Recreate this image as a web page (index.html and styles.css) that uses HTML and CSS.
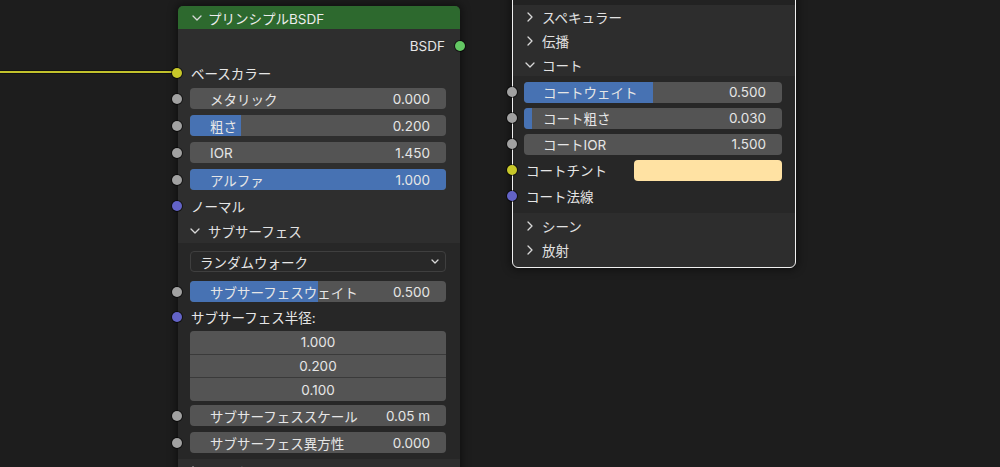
FILE: index.html
```html
<!DOCTYPE html>
<html lang="ja">
<head>
<meta charset="utf-8">
<title>Principled BSDF</title>
<link rel="stylesheet" href="styles.css">
</head>
<body>
<div class="canvas">
  <div class="link"></div>

  <div class="node node-left">
    <div class="node-header">
      <svg class="chev-down" width="10" height="6" viewBox="0 0 10 6"><path d="M1 1 L5 5 L9 1"/></svg>
      <span>プリンシプルBSDF</span>
    </div>
    <div class="row out-row"><span>BSDF</span><span class="socket s-green out"></span></div>
    <div class="row label-row"><span class="socket s-yellow in"></span>ベースカラー</div>
    <div class="row field-row"><span class="socket s-grey in"></span>
      <div class="field"><div class="fill" style="width:0%"></div><span class="lbl">メタリック</span><span class="val">0.000</span></div></div>
    <div class="row field-row"><span class="socket s-grey in"></span>
      <div class="field"><div class="fill" style="width:20%"></div><span class="lbl">粗さ</span><span class="val">0.200</span></div></div>
    <div class="row field-row"><span class="socket s-grey in"></span>
      <div class="field"><div class="fill" style="width:0%"></div><span class="lbl">IOR</span><span class="val">1.450</span></div></div>
    <div class="row field-row"><span class="socket s-grey in"></span>
      <div class="field"><div class="fill" style="width:100%"></div><span class="lbl">アルファ</span><span class="val">1.000</span></div></div>
    <div class="row label-row normal-row"><span class="socket s-purple in"></span>ノーマル</div>
    <div class="panel-head left-head">
      <svg class="chev-down" width="10" height="6" viewBox="0 0 10 6"><path d="M1 1 L5 5 L9 1"/></svg>
      <span>サブサーフェス</span>
    </div>
    <div class="panel-body left-panel">
      <div class="dropdown-row">
        <div class="dropdown"><span>ランダムウォーク</span>
          <svg class="chev-small" width="8" height="5" viewBox="0 0 8 5"><path d="M1 1 L4 4 L7 1"/></svg>
        </div>
      </div>
      <div class="row field-row"><span class="socket s-grey in"></span>
        <div class="field"><div class="fill" style="width:50%"></div><span class="lbl">サブサーフェスウェイト</span><span class="val">0.500</span></div></div>
      <div class="row label-row radius-row"><span class="socket s-purple in"></span>サブサーフェス半径:</div>
      <div class="vector-row">
        <div class="vector">
          <div class="vec-cell">1.000</div>
          <div class="vec-cell">0.200</div>
          <div class="vec-cell">0.100</div>
        </div>
      </div>
      <div class="row field-row"><span class="socket s-grey in"></span>
        <div class="field"><div class="fill" style="width:0%"></div><span class="lbl">サブサーフェススケール</span><span class="val">0.05 m</span></div></div>
      <div class="row field-row"><span class="socket s-grey in"></span>
        <div class="field"><div class="fill" style="width:0%"></div><span class="lbl">サブサーフェス異方性</span><span class="val">0.000</span></div></div>
    </div>
    <div class="panel-head left-head">
      <svg class="chev-right" width="6" height="10" viewBox="0 0 6 10"><path d="M1 1 L5 5 L1 9"/></svg>
      <span>スペキュラー</span>
    </div>
  </div>

  <div class="node node-right">
    <div class="panel-body top-strip"></div>
    <div class="panel-head right-head h24">
      <svg class="chev-right" width="6" height="10" viewBox="0 0 6 10"><path d="M1 1 L5 5 L1 9"/></svg>
      <span>スペキュラー</span>
    </div>
    <div class="panel-head right-head h24">
      <svg class="chev-right" width="6" height="10" viewBox="0 0 6 10"><path d="M1 1 L5 5 L1 9"/></svg>
      <span>伝播</span>
    </div>
    <div class="panel-head right-head h23">
      <svg class="chev-down" width="10" height="6" viewBox="0 0 10 6"><path d="M1 1 L5 5 L9 1"/></svg>
      <span>コート</span>
    </div>
    <div class="panel-body right-panel">
      <div class="rrow rfield"><span class="socket s-grey rin"></span>
        <div class="field rf"><div class="fill" style="width:50%"></div><span class="lbl">コートウェイト</span><span class="val">0.500</span></div></div>
      <div class="rrow rfield"><span class="socket s-grey rin"></span>
        <div class="field rf"><div class="fill" style="width:3%"></div><span class="lbl">コート粗さ</span><span class="val">0.030</span></div></div>
      <div class="rrow rfield"><span class="socket s-grey rin"></span>
        <div class="field rf"><div class="fill" style="width:0%"></div><span class="lbl">コートIOR</span><span class="val">1.500</span></div></div>
      <div class="rrow rlabel tint-row"><span class="socket s-yellow rin"></span>
        <span class="tint-label">コートチント</span><div class="swatch"></div></div>
      <div class="rrow rlabel"><span class="socket s-purple rin"></span>コート法線</div>
    </div>
    <div class="panel-head right-head h25">
      <svg class="chev-right" width="6" height="10" viewBox="0 0 6 10"><path d="M1 1 L5 5 L1 9"/></svg>
      <span>シーン</span>
    </div>
    <div class="panel-head right-head h24">
      <svg class="chev-right" width="6" height="10" viewBox="0 0 6 10"><path d="M1 1 L5 5 L1 9"/></svg>
      <span>放射</span>
    </div>
  </div>
</div>
</body>
</html>
```

FILE: styles.css
```css
* { box-sizing: border-box; }

html, body {
  margin: 0;
  padding: 0;
  background: #1d1d1d;
}

body {
  font-family: "Inter", "Noto Sans CJK JP", sans-serif;
  font-size: 13.5px;
  color: #e6e6e6;
}

.canvas {
  position: relative;
  width: 1000px;
  height: 467px;
  overflow: hidden;
  background: #1d1d1d;
}

.link {
  position: absolute;
  left: 0;
  top: 71px;
  width: 177px;
  height: 2px;
  background: #c2c22c;
  box-shadow: 0 0 0 1px rgba(0, 0, 0, 0.35);
}

.node {
  position: absolute;
  background: #2e2e2e;
}

.node-left {
  left: 178px;
  top: 6px;
  width: 282px;
  border-radius: 5px 5px 0 0;
  box-shadow: 0 0 8px 2px rgba(0, 0, 0, 0.45);
}

.node-right {
  left: 512px;
  top: -20px;
  width: 284px;
  border: 1px solid #f0f0f0;
  border-radius: 6px;
  padding-bottom: 5px;
  background: #2d2d2d;
  box-shadow: 0 0 8px 2px rgba(0, 0, 0, 0.45);
}

svg path {
  fill: none;
  stroke: #d8d8d8;
  stroke-width: 1.3;
  stroke-linecap: round;
  stroke-linejoin: round;
}

.node-header {
  height: 23px;
  background: #2d692e;
  border-radius: 5px 5px 0 0;
  display: flex;
  align-items: center;
  gap: 6px;
  padding-left: 14px;
  color: #ececec;
}

.row {
  position: relative;
  display: flex;
  align-items: center;
}

.out-row {
  height: 24px;
  margin-top: 5px;
  justify-content: flex-end;
  padding-right: 15px;
}

.label-row {
  height: 24px;
  padding-left: 13px;
}

.out-row + .label-row {
  margin-top: 3px;
}

.normal-row {
  height: 26px;
}

.field-row {
  height: 27px;
  padding: 3px 14px 3px 12px;
}

.socket {
  position: absolute;
  top: 50%;
  width: 10px;
  height: 10px;
  margin-top: -5px;
  border-radius: 50%;
  box-shadow: 0 0 0 1px rgba(0, 0, 0, 0.55);
}

.in { left: -6px; }
.out { right: -5px; }
.rin { left: -6px; }

.s-grey { background: #a1a1a1; }
.s-yellow { background: #c7c729; }
.s-purple { background: #6363c7; }
.s-green { background: #63c763; }

.field {
  position: relative;
  flex: 1;
  height: 21px;
  border-radius: 4px;
  background: #545454;
  overflow: hidden;
  display: flex;
  align-items: center;
  justify-content: space-between;
  padding: 0 16px 0 20px;
}

.fill {
  position: absolute;
  left: 0;
  top: 0;
  bottom: 0;
  background: #4772b3;
}

.lbl, .val {
  position: relative;
  white-space: nowrap;
}

.panel-head {
  display: flex;
  align-items: center;
  gap: 8px;
  color: #e2e2e2;
}

.left-head {
  height: 24px;
  padding-left: 12px;
}

.left-head .chev-right {
  margin-left: 2px;
  margin-right: 4px;
}

.panel-body {
  background: #272727;
}

.left-panel {
  padding-bottom: 3px;
}

.dropdown-row {
  padding: 8px 14px 6px 12px;
}

.dropdown {
  height: 21px;
  border: 1px solid #3f3f3f;
  border-radius: 4px;
  background: #282828;
  display: flex;
  align-items: center;
  justify-content: space-between;
  padding: 0 6px 0 9px;
}

.radius-row {
  height: 24px;
}

.vector-row {
  padding: 2px 14px 0 12px;
}

.vector {
  border-radius: 4px;
  overflow: hidden;
  background: #3a3a3a;
  display: flex;
  flex-direction: column;
  gap: 1px;
}

.vec-cell {
  height: 22.7px;
  background: #545454;
  display: flex;
  align-items: center;
  justify-content: center;
}

.vector-row + .field-row {
  margin-top: 1px;
}

/* right node */
.top-strip {
  height: 24px;
  background: #222222;
}

.right-head {
  padding-left: 14px;
  gap: 9px;
}

.right-head .chev-down {
  margin-left: -2px;
  margin-right: -2px;
}

.h23 { height: 23px; }
.h24 { height: 24px; }
.h25 { height: 25px; }

.right-panel {
  padding: 3px 0 4px 0;
}

.rrow {
  position: relative;
  height: 26px;
  display: flex;
  align-items: center;
}

.rfield {
  padding: 0 13px 0 11px;
}

.rf {
  padding: 0 16px 0 19px;
}

.rlabel {
  padding-left: 13px;
}

.tint-row {
  padding-right: 13px;
}

.tint-label {
  width: 108px;
}

.swatch {
  flex: 1;
  height: 21px;
  border-radius: 4px;
  background: #ffe2a3;
}
```
